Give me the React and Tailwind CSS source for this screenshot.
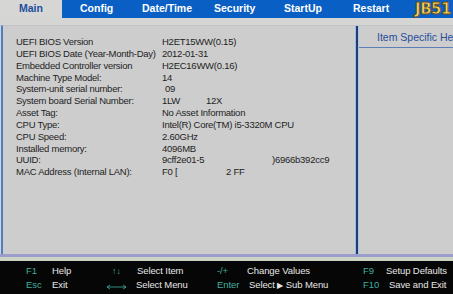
import React from 'react';

const rows = [
  ['UEFI BIOS Version', 'H2ET15WW(0.15)'],
  ['UEFI BIOS Date (Year-Month-Day)', '2012-01-31'],
  ['Embedded Controller version', 'H2EC16WW(0.16)'],
  ['Machine Type Model:', '14'],
  ['System-unit serial number:', <span className="pl-[3px]">09</span>],
  ['System board Serial Number:', <span><span className="inline-block w-[44px]">1LW</span>12X</span>],
  ['Asset Tag:', 'No Asset Information'],
  ['CPU Type:', 'Intel(R) Core(TM) i5-3320M CPU'],
  ['CPU Speed:', '2.60GHz'],
  ['Installed memory:', '4096MB'],
  ['UUID:', <span><span className="inline-block w-[110px]">9cff2e01-5</span>)6966b392cc9</span>],
  ['MAC Address (Internal LAN):', <span><span className="inline-block w-[64px]">F0 [</span>2 FF</span>],
];

const tabs = [
  ['Config', 'w-[62px]'],
  ['Date/Time', 'w-[72px]'],
  ['Security', 'w-[70px]'],
  ['StartUp', 'w-[69px]'],
  ['Restart', 'w-[50px]'],
];

const key = 'text-[#3fae9e]';

export default function App() {
  return (
    <div className="w-[453px] h-[294px] flex flex-col overflow-hidden bg-[#d3d3d1]" style={{ fontFamily: '"Liberation Sans", Arial, sans-serif' }}>
      {/* Tab bar */}
      <div className="h-[18px] flex items-stretch bg-[#0a5fc4] text-[10.5px] font-bold text-white">
        <div className="w-[62px] flex items-center justify-center bg-[#d6d6d4] text-[#1b4f9e]">Main</div>
        <div className="flex items-center pl-[18px]">
          {tabs.map(([t, w]) => (
            <span key={t} className={w}>{t}</span>
          ))}
        </div>
        <div className="ml-auto pr-[2px] flex items-center text-[15px] font-black text-[#f8d866] [-webkit-text-stroke:0.9px_#6e4e0e] tracking-[-0.5px]" style={{ fontFamily: '"DejaVu Sans", sans-serif' }}>
          JB51
        </div>
      </div>

      <div className="h-[7px] bg-[#d5d6d3]" />

      {/* Main panel */}
      <div className="h-[229px] flex border-l-[2px] border-[#4d7fc4] ml-[1px] border-t border-t-[#bfc3c8] bg-[#cdcdcd]">
        <div className="w-[352px] pl-[13px] pt-[10px] text-[9.5px] tracking-[-0.25px] leading-[11.85px] text-[#1e1e1e]">
          {rows.map(([k, v], i) => (
            <div key={i} className="flex">
              <span className="w-[146px] shrink-0 whitespace-nowrap">{k}</span>
              <span className="whitespace-nowrap">{v}</span>
            </div>
          ))}
        </div>
        <div className="w-[1px] bg-[#9dbbe0]" />
        <div className="w-[2px] bg-[#1f3c78]" />
        <div className="w-[1px] bg-[#a8c4e6]" />
        <div className="flex-1 flex flex-col overflow-hidden">
          <div className="h-[22px] border-b border-[#5d7fb6] pl-[18px] pt-[4px] text-[10.5px] text-[#264e9c] whitespace-nowrap">
            Item Specific Help
          </div>
        </div>
      </div>

      <div className="h-[3px] bg-[#9b9dcd]" />
      <div className="h-[4px] bg-[#cdd3c4]" />

      {/* Footer */}
      <div className="h-[33px] bg-[#060606] text-[9.5px] tracking-[-0.1px] leading-[12px] text-[#e6e6e6] pt-[4px] pl-[26px] grid grid-cols-[26px_56px_29px_80px_30px_116px_23px_1fr] whitespace-nowrap">
        <span className={key}>F1</span>
        <span>Help</span>
        <span className={`${key} text-[9px] pl-[4px]`}>↑↓</span>
        <span>Select Item</span>
        <span className={key}>-/+</span>
        <span>Change Values</span>
        <span className={key}>F9</span>
        <span>Setup Defaults</span>
        <span className={key}>Esc</span>
        <span>Exit</span>
        <span className="flex items-center">
          <svg width="19" height="6" viewBox="0 0 19 6" className="-ml-[1px]">
            <path d="M0 3H19M0 3L3 1M0 3L3 5M19 3L16 1M19 3L16 5" stroke="#3fae9e" strokeWidth="0.8" fill="none" />
          </svg>
        </span>
        <span className="-ml-[1px]">Select Menu</span>
        <span className={key}>Enter</span>
        <span className="ml-[2px]">Select <span className="text-[8px]">▶</span> Sub Menu</span>
        <span className={key}>F10</span>
        <span className="ml-[3px]">Save and Exit</span>
      </div>
    </div>
  );
}
